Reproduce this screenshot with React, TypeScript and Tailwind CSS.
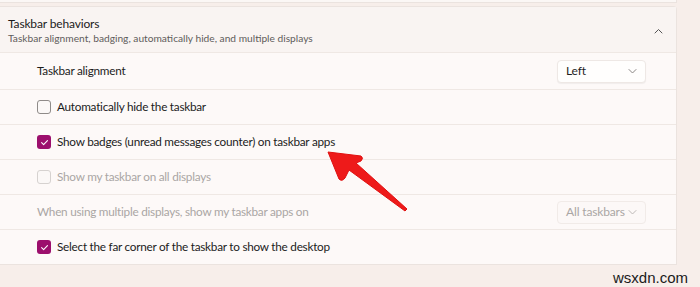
import * as React from "react";

function Check({ on, disabled }: { on?: boolean; disabled?: boolean }) {
  if (on) {
    return (
      <span className="flex h-[14px] w-[14px] shrink-0 items-center justify-center rounded-[3px] bg-[#9c0f6d]">
        <svg width="9" height="9" viewBox="0 0 10 10" fill="none">
          <path d="M1.8 5.2 L4 7.3 L8.3 2.8" stroke="#fff" strokeWidth="1.2" strokeLinecap="round" strokeLinejoin="round" />
        </svg>
      </span>
    );
  }
  return (
    <span
      className={
        "h-[14px] w-[14px] shrink-0 rounded-[3px] border bg-[#fbf8f7] " +
        (disabled ? "border-[#d6d2d0]" : "border-[#8f8b89]")
      }
    />
  );
}

function Chevron({ up, color }: { up?: boolean; color: string }) {
  return (
    <svg width="9" height="6" viewBox="0 0 9 6" fill="none">
      <path d={up ? "M1 5 L4.5 1.5 L8 5" : "M1 1.5 L4.5 5 L8 1.5"} stroke={color} strokeWidth="1" strokeLinecap="round" strokeLinejoin="round" />
    </svg>
  );
}

function Select({ label, disabled }: { label: string; disabled?: boolean }) {
  return (
    <div
      className={
        "flex h-[23px] w-[89px] items-center justify-between whitespace-nowrap rounded-[4px] border pl-[8px] pr-[8px] text-[12px] tracking-[-0.15px] " +
        (disabled
          ? "border-[#f1ebe8] bg-[#fcf8f7] text-[#aaa6a4]"
          : "border-[#eee8e5] bg-[#fffefd] text-[#1f1f1f] shadow-[0_1px_1px_rgba(0,0,0,0.05)]")
      }
    >
      <span>{label}</span>
      <Chevron color={disabled ? "#bdb8b6" : "#8a8684"} />
    </div>
  );
}

function Row({ children, first }: { children: React.ReactNode; first?: boolean }) {
  return (
    <div
      className={
        "flex items-center border-t border-[#efe8e4] pl-[37px] pr-[30px] text-[11.75px] tracking-[-0.25px] " +
        (first ? "h-[37px]" : "h-[35px]")
      }
    >
      {children}
    </div>
  );
}

export default function App() {
  return (
    <div className="relative h-[287px] w-[700px] overflow-hidden bg-[#f7eeea] font-['Lato',sans-serif] text-[#1c1c1c]">
      {/* bottom of previous card */}
      <div className="h-[3px] w-[677px] border-b border-r border-[#ebe3df] bg-[#fbf7f5]" />
      <div className="mt-[3px] w-[677px] rounded-tr-[4px] border-r border-t border-b border-[#ebe3df] bg-[#fdf9f8]">
        <div className="flex h-[45px] items-center justify-between bg-[#f9f4f2] pl-2 pr-[13px] pt-[3px]">
          <div className="leading-none">
            <div className="text-[12px] tracking-[-0.15px] text-[#1b1b1b]">Taskbar behaviors</div>
            <div className="mt-[3px] text-[10.2px] text-[#5f5c5b]">
              Taskbar alignment, badging, automatically hide, and multiple displays
            </div>
          </div>
          <Chevron up color="#555" />
        </div>
        <Row first>
          <span className="flex-1">Taskbar alignment</span>
          <Select label="Left" />
        </Row>
        <Row>
          <Check />
          <span className="ml-[6px]">Automatically hide the taskbar</span>
        </Row>
        <Row>
          <Check on />
          <span className="ml-[6px]">Show badges (unread messages counter) on taskbar apps</span>
        </Row>
        <Row>
          <Check disabled />
          <span className="ml-[6px] text-[#aaa6a4]">Show my taskbar on all displays</span>
        </Row>
        <Row>
          <span className="flex-1 text-[#aaa6a4]">When using multiple displays, show my taskbar apps on</span>
          <Select label="All taskbars" disabled />
        </Row>
        <Row>
          <Check on />
          <span className="ml-[6px]">Select the far corner of the taskbar to show the desktop</span>
        </Row>
      </div>
      <div className="absolute bottom-[2px] right-[12px] text-[15px] leading-none text-[#1a1a1a] font-['Liberation_Sans',sans-serif]">
        wsxdn.com
      </div>
      <svg className="absolute left-0 top-0" width="700" height="287" viewBox="0 0 700 287">
        <path
          d="M328 152 L361 156 Q364 158 361 161 L356 163 L407 209 L405 211 L349 170 L345 178 Q342 182 339 179 Z"
          fill="#ee1a1a"
          stroke="#e01010"
          strokeWidth="1"
          strokeLinejoin="round"
        />
      </svg>
    </div>
  );
}
